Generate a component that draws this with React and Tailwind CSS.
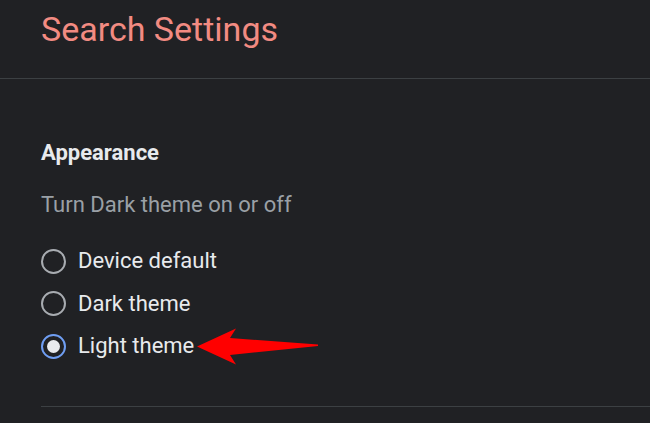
const OPTIONS = ["Device default", "Dark theme", "Light theme"]

function Radio({ checked }) {
  if (checked) {
    return (
      <span className="flex h-[25px] w-[25px] shrink-0 items-center justify-center rounded-full border-2 border-[#6f9ef3]">
        <span className="h-[13px] w-[13px] rounded-full bg-[#e8eaed]" />
      </span>
    )
  }
  return (
    <span className="h-[25px] w-[25px] shrink-0 rounded-full border-2 border-[#a8acb1]" />
  )
}

function Arrow() {
  return (
    <svg
      className="absolute left-[190px] top-[320px]"
      width="140"
      height="50"
      viewBox="0 0 140 50"
    >
      <path
        d="M7 26.5 L46 8.5 L40 18 L128 24.5 L128 26 L40 35 L46 44.5 Z"
        fill="#ff0000"
      />
    </svg>
  )
}

export default function App() {
  const selected = "Light theme"

  return (
    <div className="relative h-[423px] w-[650px] overflow-hidden bg-[#202124] font-['Roboto',sans-serif]">
      <header className="h-[79px] border-b border-[#3c4043] px-[41px] pt-[9px]">
        <h1 className="text-[34px] leading-[40px] text-[#f28b82]">
          Search Settings
        </h1>
      </header>

      <section className="pl-[41px] pt-[61px]">
        <h2 className="text-[22px] font-bold leading-[26px] text-[#e8eaed]">
          Appearance
        </h2>
        <p className="mt-[25px] text-[22px] leading-[28px] text-[#9aa0a6]">
          Turn Dark theme on or off
        </p>

        <div className="mt-[21px] flex flex-col">
          {OPTIONS.map(opt => (
            <label
              key={opt}
              className="flex h-[42.5px] items-center gap-[12px] text-[22px] leading-[28px] text-[#e8eaed]"
            >
              <Radio checked={opt === selected} />
              {opt}
            </label>
          ))}
        </div>

        <div className="mt-[38px] h-px bg-[#3c4043]" />
      </section>

      <Arrow />
    </div>
  )
}
